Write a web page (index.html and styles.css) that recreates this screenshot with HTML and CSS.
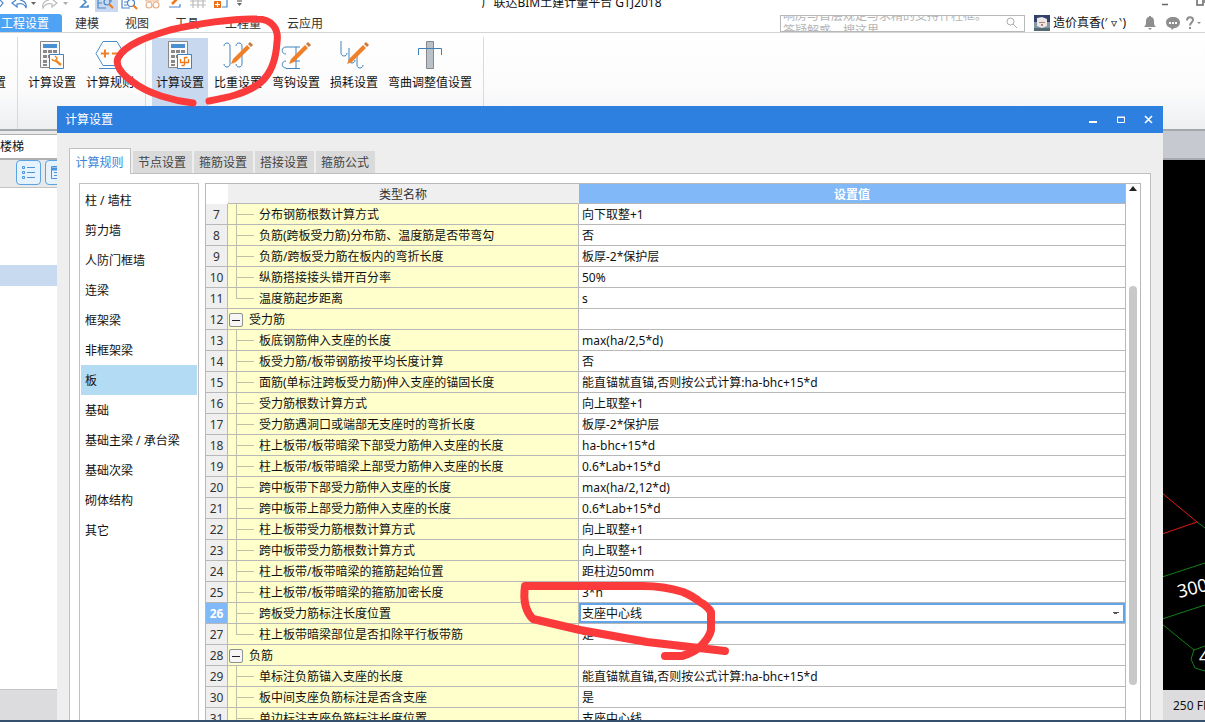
FILE: index.html
```html
<!DOCTYPE html>
<html lang="zh-CN">
<head>
<meta charset="utf-8">
<title>广联达BIM土建计量平台 GTJ2018</title>
<link rel="stylesheet" href="styles.css">
</head>
<body>
<div class="app">
  <header class="titlebar">
    <svg class="quick" width="250" height="12" viewBox="0 0 250 12" fill="none" stroke="#4a86c8" stroke-width="1.2">
      <path d="M0 7l3-4-3-3"/>
      <path d="M16 0l-4 3 5 4V4c4-1 8 0 9 4 1-4-1-7-6-8"/>
      <path d="M31 2h5l-2.500 3z" fill="#666" stroke="none"/>
      <path d="M53 0l4 3-5 4V4c-4-1-7 0-9 4-1-4 1-7 6-8" stroke="#bbb"/>
      <path d="M63 2h5l-2.500 3z" fill="#aaa" stroke="none"/>
      <path d="M82-2l4 4-5 5h7V5" stroke-width="1.600"/>
      <rect x="95" y="-3" width="23" height="15" fill="#c8d8f0" stroke="none"/>
      <path d="M98-1v9h8M98 3h4M111-1v3"/><circle cx="107" cy="2" r="3"/><path d="M109 4l4 4" stroke="#f07818" stroke-width="2"/>
      <path d="M122-1v9h8M124 2h4M124 5h3M133-1v2"/><circle cx="131" cy="3" r="3.500"/><path d="M133 5l4 4" stroke="#f07818" stroke-width="2"/>
      <g stroke="#e9ad83"><path d="M146-1v2h12v-2"/><circle cx="149" cy="5" r="3"/><circle cx="156" cy="5" r="3"/></g>
      <path d="M169 7h11M175 7h5v-3"/><path d="M172 4l6-6" stroke="#f07818" stroke-width="2.500"/>
      <path d="M190 1h16M190 5h16M193-1v9M198-1v9M203-1v9" stroke="#bbb"/>
      <path d="M222 7h5v-9"/><path d="M214 1h7v7h-7z" fill="#e8701c" stroke="none"/><path d="M215 4.500h5M217.500 2v5" stroke="#fff"/>
      <path d="M237 1h5" stroke="#666"/><path d="M237 3h5l-2.500 3z" fill="#666" stroke="none"/>
    </svg>
    <div class="app-title">广联达BIM土建计量平台 GTJ2018</div>
    <svg class="app-controls" width="50" height="12" viewBox="0 0 50 12" fill="none" stroke="#666" stroke-width="1.500"><path d="M7 4.500h6M42 0v5h6v-5M44-1h6v4"/></svg>
  </header>

  <nav class="menubar">
    <button class="menu active">工程设置</button>
    <button class="menu">建模</button>
    <button class="menu">视图</button>
    <button class="menu">工具</button>
    <button class="menu">工程量</button>
    <button class="menu">云应用</button>
    <div class="account">
      <div class="search">
        <textarea rows="2" aria-label="搜索" placeholder="响房与首层规定与求精的支持什柱框。&#10;答疑解惑，搜这里"></textarea>
        <svg width="12" height="12" viewBox="0 0 12 12" fill="none" stroke="#aaa"><circle cx="4.500" cy="4.500" r="3.500"/><path d="M7 7l4 4"/></svg>
      </div>
      <svg class="avatar" width="16" height="16" viewBox="0 0 16 16"><path fill="#34406c" d="M0 0h16v16H0z"/><path fill="#8597a5" d="M0 7h16v9H0z"/><path fill="#ece7e5" d="M3 3l5-1 5 2v7l-5 2-5-2z"/><path fill="#b88175" d="M5 7h6v1H5zM7 9h2v2H7z"/><path fill="#536b70" d="M0 13h16v3H0z"/></svg>
      <span class="user">造价真香(′ ▿ ‵)</span>
      <svg class="status-icons" width="58" height="16" viewBox="0 0 58 16" fill="#8e8e8e"><path d="M1 12c2-2 2-3 2-6 0-2 1-4 3-4V1h2v1c2 0 3 2 3 4 0 3 0 4 2 6zM5 13h4l-2 2z"/><path d="M30 2c4 0 7 2 7 5.500S34 13 31 13l-2 2-1-2c-3-.5-5-2.500-5-5.500C23 4 26 2 30 2z"/><path d="M26 7h2v2h-2zM29 7h2v2h-2zM32 7h2v2h-2z" fill="#fff"/><path d="M44 5.500C44 1 50 1.500 50 5c0 2.500-3 2.500-3 5.500" fill="none" stroke="#8e8e8e" stroke-width="2"/><path d="M46 12h2v2h-2zM54 7h4l-2 2z"/></svg>
    </div>
  </nav>

  <section class="ribbon">
    <span class="cut-label">置</span>
    <i class="rule"></i>
    <div class="group">
      <button class="tool"><svg width="32" height="32" viewBox="0 0 32 32"><g id="calc"><path d="M4.500 2.500h19v26h-19z" fill="#f8f8f8" stroke="#888"/><path d="M7 5h14v4H7z" fill="#4a90d0"/><path d="M7 11h4v3H7zM12 11h4v3h-4zM17 11h4v3h-4zM7 16h4v3H7zM12 16h4v3h-4zM7 21h4v3H7zM7 25h4v2H7z" fill="#888"/><path d="M13.500 15.500h14v14h-14z" fill="#fff" stroke="#3f83c4"/></g><path d="M19 21l6 5" stroke="#f08a28" stroke-width="2.500"/><path d="M16 20c1 3 5 2 5-1l-2-2" fill="none" stroke="#f08a28" stroke-width="1.500"/></svg>计算设置</button>
      <button class="tool"><svg width="32" height="32" viewBox="0 0 32 32" fill="none"><path d="M9 2.500h14l7 12-7 12H9l-7-12zM5 29.500h22" stroke="#4a8ac8"/><path d="M7 14.500h8M11 10.500v8M18 14.500h6" stroke="#f08028" stroke-width="2"/></svg>计算规则</button>
    </div>
    <i class="rule"></i>
    <div class="group">
      <button class="tool active"><svg width="32" height="32" viewBox="0 0 32 32"><use href="#calc"/><path d="M16.500 20v3.500h8V20M20.500 18v8M20.500 18.500h3M17.500 26.500h3" fill="none" stroke="#f07818" stroke-width="1.300"/></svg>计算设置</button>
      <button class="tool"><svg width="32" height="32" viewBox="0 0 32 32" fill="none"><path d="M2 7c0-4 6-4 6 0v18c0 4-6 4-6 0M14 7c0-4 6-4 6 0v18c0 4-6 4-6 0" stroke="#4384bd"/><g id="pencil"><path d="M11 20L25 6l3 3-14 14-5 2z" fill="#f08028"/><path d="M26 5l2-2 3 3-2 2z" fill="#c87838"/></g></svg>比重设置</button>
      <button class="tool"><svg width="32" height="32" viewBox="0 0 32 32" fill="none"><path d="M6 15c-5 0-5-7 0-7h14M6 29c-5 0-5-7 0-7M6 29.500h14M16 8v21M13 22h7" stroke="#4384bd"/><use href="#pencil"/></svg>弯钩设置</button>
      <button class="tool"><svg width="32" height="32" viewBox="0 0 32 32" fill="none"><path d="M3 2v12c0 4 6 4 6 0M11 9v12c0 4 6 4 6 0M19 17v9c0 4 6 4 6 0" stroke="#4384bd"/><use href="#pencil"/></svg>损耗设置</button>
      <button class="tool wide"><svg width="32" height="32" viewBox="0 0 32 32"><path d="M12.500 2.500h7v27h-7z" fill="#bac0c8" stroke="#888"/><path d="M4.500 16V9.500h23V16" fill="none" stroke="#3f7fb5"/></svg>弯曲调整值设置</button>
    </div>
    <i class="rule"></i>
  </section>

  <main class="workspace">
    <aside class="side">
      <div class="floor">楼梯</div>
      <div class="side-tools">
        <button class="view" aria-label="列表"><svg width="16" height="16" viewBox="0 0 16 16" fill="none" stroke="#4a94dc"><path d="M1.500 1.500h2v2h-2zM1.500 6.500h2v2h-2zM1.500 11.500h2v2h-2zM6 2.500h8M6 7.500h8M6 12.500h8"/></svg></button>
        <button class="view" aria-label="面板"><svg width="16" height="16" viewBox="0 0 16 16" fill="none" stroke="#4a94dc"><path d="M1.500 1.500h13v12h-13zM4 7.500h9M4 10.500h9"/><path d="M2 4h12" stroke-width="3"/></svg></button>
      </div>
      <div class="side-tree"><div class="side-selected"></div></div>
      <div class="side-foot"></div>
    </aside>
    <section class="view3d">
      <div class="view3d-head"></div>
      <svg class="scene" width="43" height="530" viewBox="0 0 43 530" fill="none">
        <path d="M0 333l35 29L0 374" stroke="#e01818"/>
        <path d="M35 362l8 6M0 417l43-14M0 459l43-14M0 464l32 26M32 490l-3 9 4 9 10 3M32 490l11-4" stroke="#108018"/>
        <text x="17" y="438" transform="rotate(-14 17 438)">300</text>
        <text x="37" y="503">4</text>
      </svg>
      <div class="fps">250 FPS</div>
    </section>
  </main>
  <div class="taskbar"></div>
</div>

<section class="dialog" role="dialog" aria-label="计算设置">
  <header class="dialog-title">
    <h1>计算设置</h1>
    <button aria-label="最小化"><svg width="10" height="10" viewBox="0 0 10 10" fill="none" stroke="#fff" stroke-width="2"><path d="M1 7h8"/></svg></button>
    <button aria-label="最大化"><svg width="10" height="10" viewBox="0 0 10 10" fill="none" stroke="#fff"><path d="M1.500 2.500h7v5h-7zM1 2h8"/></svg></button>
    <button aria-label="关闭"><svg width="10" height="10" viewBox="0 0 10 10" fill="none" stroke="#fff" stroke-width="1.600"><path d="M1 1l7 7M8 1L1 8"/></svg></button>
  </header>
  <nav class="tabs">
    <button class="tab active">计算规则</button>
    <button class="tab">节点设置</button>
    <button class="tab">箍筋设置</button>
    <button class="tab">搭接设置</button>
    <button class="tab">箍筋公式</button>
  </nav>
  <div class="panel">
    <nav class="kinds">
      <button>柱 / 墙柱</button>
      <button>剪力墙</button>
      <button>人防门框墙</button>
      <button>连梁</button>
      <button>框架梁</button>
      <button>非框架梁</button>
      <button class="active">板</button>
      <button>基础</button>
      <button>基础主梁 / 承台梁</button>
      <button>基础次梁</button>
      <button>砌体结构</button>
      <button>其它</button>
    </nav>
    <div class="grid">
      <div class="grid-body">
        <table>
          <colgroup><col class="c-num"><col class="c-name"><col></colgroup>
          <thead><tr><th class="corner"></th><th>类型名称</th><th class="current">设置值</th></tr></thead>
          <tbody>
            <tr><th>7</th><td class="leaf">分布钢筋根数计算方式</td><td>向下取整+1</td></tr>
            <tr><th>8</th><td class="leaf">负筋(跨板受力筋)分布筋、温度筋是否带弯勾</td><td>否</td></tr>
            <tr><th>9</th><td class="leaf">负筋/跨板受力筋在板内的弯折长度</td><td>板厚-2*保护层</td></tr>
            <tr><th>10</th><td class="leaf">纵筋搭接接头错开百分率</td><td>50%</td></tr>
            <tr><th>11</th><td class="leaf last">温度筋起步距离</td><td>s</td></tr>
            <tr><th>12</th><td class="branch"><button aria-label="折叠"></button>受力筋</td><td></td></tr>
            <tr><th>13</th><td class="leaf">板底钢筋伸入支座的长度</td><td>max(ha/2,5*d)</td></tr>
            <tr><th>14</th><td class="leaf">板受力筋/板带钢筋按平均长度计算</td><td>否</td></tr>
            <tr><th>15</th><td class="leaf">面筋(单标注跨板受力筋)伸入支座的锚固长度</td><td>能直锚就直锚,否则按公式计算:ha-bhc+15*d</td></tr>
            <tr><th>16</th><td class="leaf">受力筋根数计算方式</td><td>向上取整+1</td></tr>
            <tr><th>17</th><td class="leaf">受力筋遇洞口或端部无支座时的弯折长度</td><td>板厚-2*保护层</td></tr>
            <tr><th>18</th><td class="leaf">柱上板带/板带暗梁下部受力筋伸入支座的长度</td><td>ha-bhc+15*d</td></tr>
            <tr><th>19</th><td class="leaf">柱上板带/板带暗梁上部受力筋伸入支座的长度</td><td>0.6*Lab+15*d</td></tr>
            <tr><th>20</th><td class="leaf">跨中板带下部受力筋伸入支座的长度</td><td>max(ha/2,12*d)</td></tr>
            <tr><th>21</th><td class="leaf">跨中板带上部受力筋伸入支座的长度</td><td>0.6*Lab+15*d</td></tr>
            <tr><th>22</th><td class="leaf">柱上板带受力筋根数计算方式</td><td>向上取整+1</td></tr>
            <tr><th>23</th><td class="leaf">跨中板带受力筋根数计算方式</td><td>向上取整+1</td></tr>
            <tr><th>24</th><td class="leaf">柱上板带/板带暗梁的箍筋起始位置</td><td>距柱边50mm</td></tr>
            <tr><th>25</th><td class="leaf">柱上板带/板带暗梁的箍筋加密长度</td><td>3*h</td></tr>
            <tr class="current"><th>26</th><td class="leaf"><label for="v26">跨板受力筋标注长度位置</label></td><td class="edit"><select id="v26"><option>支座中心线</option></select></td></tr>
            <tr><th>27</th><td class="leaf last">柱上板带暗梁部位是否扣除平行板带筋</td><td>是</td></tr>
            <tr><th>28</th><td class="branch"><button aria-label="折叠"></button>负筋</td><td></td></tr>
            <tr><th>29</th><td class="leaf">单标注负筋锚入支座的长度</td><td>能直锚就直锚,否则按公式计算:ha-bhc+15*d</td></tr>
            <tr><th>30</th><td class="leaf">板中间支座负筋标注是否含支座</td><td>是</td></tr>
            <tr><th>31</th><td class="leaf">单边标注支座负筋标注长度位置</td><td>支座中心线</td></tr>
          </tbody>
        </table>
      </div>
      <div class="scrollbar">
        <svg width="8" height="5" viewBox="0 0 8 5"><path d="M4 0l4 5H0z" fill="#222"/></svg>
        <div class="thumb"></div>
      </div>
    </div>
  </div>
</section>

<svg class="marks" width="740" height="722" viewBox="0 0 740 722" fill="none" stroke="#fb3b3b" stroke-linecap="round" stroke-linejoin="round">
  <path stroke-width="7" d="M193 103C175 101 148 94 133 82C121 74 115 65 118 58C125 44 150 36 170 30C195 24 235 18 257 19C272 19 279 29 277 42C276 60 271 74 260 83C246 94 225 98 209 101"/>
  <path stroke-width="8" d="M665 656H682C690 654 696 650 700 647C706 641 710 636 711 630V612C708 607 704 604 700 602C694 597 690 595 683 592C670 588 657 586 643 586H525C523 600 525 611 533 619L580 630L647 642L725 651"/>
</svg>
</body>
</html>
```

FILE: styles.css
```css
* { box-sizing: border-box; }

body {
  margin: 0;
  height: 100vh;
  overflow: hidden;
  position: relative;
  background: #fff;
  color: #111;
  font: 12px/20px "Noto Sans", "Noto Sans CJK SC", sans-serif;
}

button, select, textarea {
  margin: 0;
  padding: 0;
  border: 0;
  background: none;
  color: inherit;
  font: inherit;
}

svg { display: block; flex: none; }

.app { display: flex; flex-direction: column; height: 100%; }

/* Main window */
.titlebar {
  display: flex;
  flex: none;
  height: 14px;
  overflow: hidden;
  justify-content: space-between;
  align-items: flex-start;
}
.quick { width: 250px; }
.app-title { align-self: flex-end; flex: 1; padding: 0 262px 1px 0; text-align: center; }

.menubar {
  display: flex;
  flex: none;
  gap: 26px;
  height: 19px;
  border-bottom: 1px solid #d4d4d4;
  color: #333;
}
.menu { padding-top: 2px; line-height: 16px; white-space: nowrap; }
.menu.active { width: 62px; margin-right: -13px; padding-left: 1px; border-radius: 0 3px 0 0; background: #4fa3f5; color: #fff; text-align: left; }

.account { display: flex; align-items: center; margin-left: auto; padding-right: 4px; }
.search {
  display: flex;
  align-items: center;
  width: 245px;
  height: 17px;
  margin-right: 9px;
  padding: 0 6px 0 2px;
  overflow: hidden;
  border: 1px solid #b8b8b8;
}
.search textarea { flex: 1; height: 30px; line-height: 15px; resize: none; overflow: hidden; }
.search textarea::placeholder { color: #b4b4b4; }
.user { width: 89px; margin-left: 3px; color: #111; white-space: nowrap; }
.status-icons { margin-left: 1px; }

.ribbon {
  display: flex;
  flex: none;
  height: 98px;
  padding-top: 4px;
  border-bottom: 2px solid #a4a8ac;
  background: linear-gradient(#fff, #fbfbfc 60%, #edeff1);
}
.cut-label { width: 17px; padding-top: 36px; text-indent: -6px; }
.rule { width: 1px; background: #d8dadc; }
.group { display: flex; gap: 2px; padding: 1px 7px 0 6px; }
.tool { display: flex; flex-direction: column; align-items: center; width: 56px; height: 80px; line-height: 20px; white-space: nowrap; }
.tool svg { margin: 1px 0 2px; }
.tool.active { background: #c8d8ee; }
.tool.wide { width: 92px; }

.workspace { display: flex; flex: 1; min-height: 0; }
.side { display: flex; flex-direction: column; width: 57px; background: #e9e9ea; }
.floor { height: 26px; margin-top: 3px; border: solid #b0b0b0; border-width: 1px 0 2px; background: #fff; line-height: 23px; }
.side-tools { display: flex; gap: 4px; height: 28px; padding-left: 16px; overflow: hidden; border-bottom: 1px solid #c4c4c4; }
.view { display: grid; place-items: center; flex: none; width: 25px; height: 25px; border: 1px solid #5aa4e4; border-radius: 4px; background: #e6f2fd; }
.side-tree { flex: 1; padding-top: 77px; background: #fff; }
.side-selected { height: 21px; background: #c8daf0; }
.side-foot { height: 31px; border-top: 1px solid #c4c4c4; background: #dcdcde; }

.view3d { display: flex; flex: 1; flex-direction: column; align-items: flex-end; background: #000; }
.view3d-head { flex: none; width: 100%; height: 29px; border-bottom: 2px solid #a8aab0; background: #c6c9cf; }
.scene { flex: 1; min-height: 0; }
.scene text { fill: #fff; font-size: 18px; }
.fps { width: 42px; height: 30px; padding-left: 10px; overflow: hidden; background: #dcdcde; line-height: 32px; white-space: nowrap; }
.taskbar { flex: none; height: 2px; background: #34506c; }

/* Settings dialog */
.dialog {
  display: flex;
  flex-direction: column;
  position: absolute;
  inset: 106px 42px 2px 57px;
  background: #eeeeef;
}
.dialog-title { display: flex; flex: none; gap: 18px; align-items: center; height: 27px; padding: 0 9px 0 8px; background: #2d7fe0; color: #fff; }
.dialog-title h1 { flex: 1; margin: 0; font-size: 12px; font-weight: 400; }

.tabs { display: flex; flex: none; gap: 2px; align-items: flex-end; height: 41px; margin-bottom: -1px; padding-left: 12px; z-index: 1; }
.tab { width: 59px; height: 22px; margin-bottom: 1px; padding: 2px 1px 0 0; background: #dadada; color: #444; text-align: center; }
.tab.active { width: 62px; height: 26px; margin-bottom: 0; border: 1px solid #c0c0c0; border-bottom: 0; background: #fff; color: #3c84d8; }

.panel { display: flex; flex: 1; min-height: 0; margin: 0 12px; padding: 9px 9px 0; border: 1px solid #c0c0c0; border-bottom: 0; background: #fff; }
.kinds { display: flex; flex: none; flex-direction: column; width: 120px; margin-right: 6px; padding: 1px; border: 1px solid #c0c0c0; border-bottom: 0; }
.kinds button { height: 30px; padding: 2px 0 0 4px; line-height: 28px; text-align: left; white-space: nowrap; }
.kinds .active { background: #b4dbf4; }

.grid { display: flex; flex: 1; min-width: 0; border: 1px solid #b8b8b8; border-bottom: 0; }
.grid-body { flex: 1; min-width: 0; overflow: hidden; }
table { width: 100%; border-spacing: 0; table-layout: fixed; }
.c-num { width: 22px; }
.c-name { width: 351px; }
th, td { height: 21px; padding: 2px 4px 0 3px; overflow: hidden; border: solid #b8b8b8; border-width: 0 1px 1px 0; line-height: 18px; white-space: nowrap; }
th { padding: 2px 0 0; background: #efefef; color: #333; font-weight: 400; text-align: center; }
thead th { height: 20px; border-right-color: #efefef; line-height: 17px; }
thead .corner { border-color: #fff; background: #fff; }
thead .current { border-right-color: #b8b8b8; background: #80b8f8; color: #fff; font-weight: 700; }
tbody .current th { background: #80b8f8; color: #fff; font-weight: 700; }

.leaf, .branch { background-color: #ffffcc; background-repeat: no-repeat; }
.leaf {
  padding-left: 31px;
  background-image: linear-gradient(#c0c0a8, #c0c0a8), linear-gradient(#c0c0a8, #c0c0a8);
  background-position: 8px 0, 8px 10px;
  background-size: 1px 100%, 18px 1px;
}
.leaf.last { background-size: 1px 10px, 18px 1px; }
.branch { padding-left: 1px; }
.branch button {
  width: 14px;
  height: 14px;
  margin-right: 6px;
  border: 1px solid #909090;
  border-radius: 2px;
  background: linear-gradient(#222, #222) center / 8px 1px no-repeat #f6f6f6;
  vertical-align: -2px;
}
.edit { padding: 0; }
.edit select {
  display: block;
  width: 100%;
  height: 20px;
  padding: 1px 1px 0;
  border: 2px solid #62a4ea;
  border-radius: 0;
  appearance: none;
  background: linear-gradient(to bottom right, #555 50%, transparent 50%) right 4px center / 3px 3px no-repeat,
    linear-gradient(to bottom left, #555 50%, transparent 50%) right 7px center / 3px 3px no-repeat #fff;
  line-height: 16px;
}

.scrollbar { display: flex; flex: none; flex-direction: column; align-items: center; width: 14px; padding: 2px 0 35px; }
.thumb { flex: 1; width: 8px; margin-top: 95px; border-radius: 4px; background: #c8c8c8; }

/* Hand-drawn highlights */
.marks { position: absolute; top: 0; left: 0; pointer-events: none; }
```
